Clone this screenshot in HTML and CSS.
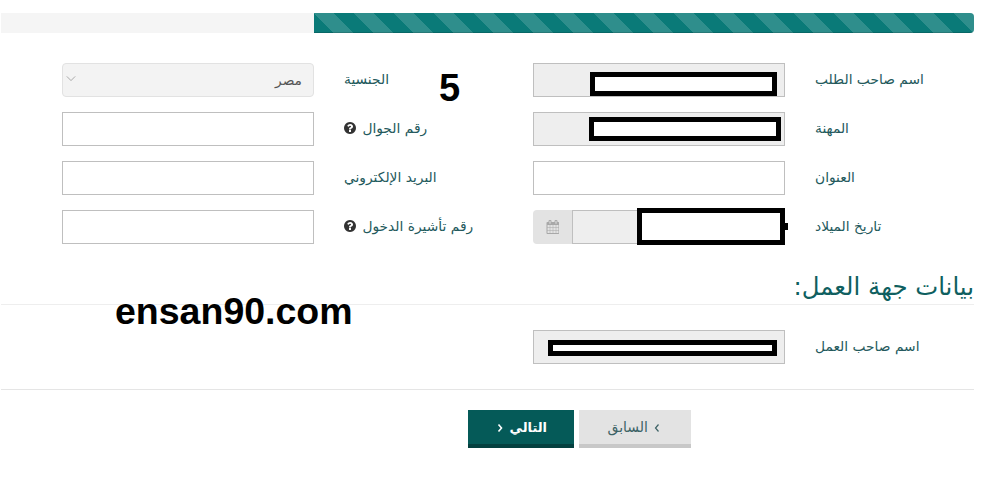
FILE: index.html
```html
<!DOCTYPE html>
<html lang="ar" dir="rtl">
<head>
    <meta charset="UTF-8">
    <title>بيانات مقدم الطلب</title>
    <link rel="stylesheet" href="styles.css">
</head>
<body>
    <div class="page">
        <div class="progress"><div class="progress-bar"></div></div>

        <div class="form-grid">
            <div class="field">
                <label>اسم صاحب الطلب</label>
                <div class="control">
                    <input class="input locked" type="text" readonly>
                    <div class="mask mask-name"></div>
                </div>
            </div>
            <div class="field">
                <label>الجنسية</label>
                <div class="control">
                    <div class="select">
                        <span>مصر</span>
                        <svg class="chevron" viewBox="0 0 12 8"><path d="M1 1.500l5 5 5-5" fill="none" stroke="#999" stroke-width="1"/></svg>
                    </div>
                </div>
            </div>

            <div class="field">
                <label>المهنة</label>
                <div class="control">
                    <input class="input locked" type="text" readonly>
                    <div class="mask mask-job"></div>
                </div>
            </div>
            <div class="field">
                <label>رقم الجوال <svg class="help" viewBox="0 0 1536 1792"><path d="M896 1376v-192q0-14-9-23t-23-9h-192q-14 0-23 9t-9 23v192q0 14 9 23t23 9h192q14 0 23-9t9-23zm256-672q0-88-55.500-163t-138.500-116-170-41q-243 0-371 213-15 24 8 42l132 100q7 6 19 6 16 0 25-12 53-68 86-92 34-24 86-24 48 0 85.500 26t37.500 59q0 38-20 61t-68 45q-63 28-115.500 86.500t-52.500 125.500v36q0 14 9 23t23 9h192q14 0 23-9t9-23q0-19 21.500-49.500t54.500-49.500q32-18 49-28.500t46-35 44.500-48 28-60.500 12.500-81zm384 192q0 209-103 385.500t-279.500 279.500-385.500 103-385.500-103-279.500-279.500-103-385.500 103-385.500 279.500-279.500 385.500-103 385.500 103 279.500 279.500 103 385.500z"/></svg></label>
                <div class="control"><input class="input" type="text"></div>
            </div>

            <div class="field">
                <label>العنوان</label>
                <div class="control"><input class="input" type="text"></div>
            </div>
            <div class="field">
                <label>البريد الإلكتروني</label>
                <div class="control"><input class="input" type="text"></div>
            </div>

            <div class="field">
                <label>تاريخ الميلاد</label>
                <div class="control date">
                    <input class="input locked" type="text" readonly>
                    <span class="addon">
                        <svg class="calendar" viewBox="0 0 1664 1792"><path d="M192 1664h288v-288h-288v288zm352 0h320v-288h-320v288zm-352-352h288v-320h-288v320zm352 0h320v-320h-320v320zm-352-384h288v-288h-288v288zm736 736h320v-288h-320v288zm-384-736h320v-288h-320v288zm768 736h288v-288h-288v288zm-384-352h320v-320h-320v320zm-352-864v-288q0-13-9.500-22.500t-22.500-9.500h-64q-13 0-22.500 9.500t-9.500 22.500v288q0 13 9.500 22.500t22.500 9.500h64q13 0 22.500-9.500t9.500-22.500zm736 864h288v-320h-288v320zm-384-384h320v-288h-320v288zm384 0h288v-288h-288v288zm32-480v-288q0-13-9.500-22.500t-22.500-9.500h-64q-13 0-22.500 9.500t-9.500 22.500v288q0 13 9.500 22.500t22.500 9.500h64q13 0 22.500-9.500t9.500-22.500zm384-64v1280q0 52-38 90t-90 38h-1408q-52 0-90-38t-38-90v-1280q0-52 38-90t90-38h128v-96q0-66 47-113t113-47h64q66 0 113 47t47 113v96h384v-96q0-66 47-113t113-47h64q66 0 113 47t47 113v96h128q52 0 90 38t38 90z"/></svg>
                    </span>
                    <div class="mask mask-date"></div>
                    <div class="mask-nub"></div>
                </div>
            </div>
            <div class="field">
                <label>رقم تأشيرة الدخول <svg class="help" viewBox="0 0 1536 1792"><path d="M896 1376v-192q0-14-9-23t-23-9h-192q-14 0-23 9t-9 23v192q0 14 9 23t23 9h192q14 0 23-9t9-23zm256-672q0-88-55.500-163t-138.500-116-170-41q-243 0-371 213-15 24 8 42l132 100q7 6 19 6 16 0 25-12 53-68 86-92 34-24 86-24 48 0 85.500 26t37.500 59q0 38-20 61t-68 45q-63 28-115.500 86.500t-52.500 125.500v36q0 14 9 23t23 9h192q14 0 23-9t9-23q0-19 21.500-49.500t54.500-49.500q32-18 49-28.500t46-35 44.500-48 28-60.500 12.500-81zm384 192q0 209-103 385.500t-279.500 279.500-385.500 103-385.500-103-279.500-279.500-103-385.500 103-385.500 279.500-279.500 385.500-103 385.500 103 279.500 279.500 103 385.500z"/></svg></label>
                <div class="control"><input class="input" type="text"></div>
            </div>
        </div>

        <h2 class="section-title">بيانات جهة العمل:</h2>

        <div class="form-grid work-row">
            <div class="field">
                <label>اسم صاحب العمل</label>
                <div class="control">
                    <input class="input locked" type="text" readonly>
                    <div class="mask mask-employer"></div>
                </div>
            </div>
        </div>

        <div class="actions">
            <button class="btn btn-prev" type="button">
                <svg class="angle" viewBox="0 0 6 10"><path d="M4.500 1.500L1.500 5l3 3.500" fill="none" stroke="currentColor" stroke-width="1.200"/></svg>
                السابق
            </button>
            <button class="btn btn-next" type="button">
                التالي
                <svg class="angle" viewBox="0 0 6 10"><path d="M1.500 1.500L4.500 5l-3 3.500" fill="none" stroke="currentColor" stroke-width="1.600"/></svg>
            </button>
        </div>
    </div>

    <!-- كتابة فوق الصورة -->
    <div class="stamp stamp-number" dir="ltr">5</div>
    <div class="stamp stamp-site" dir="ltr">ensan90.com</div>
</body>
</html>
```

FILE: styles.css
```css
body {
    margin: 0;
    background-color: #fff;
    color: #23595c;
    font-family: "DejaVu Sans", "Noto Sans", sans-serif;
    font-size: 13.8px;
}

.page {
    padding: 13px 12px 0 1px;
}

/* شريط التقدم */
.progress {
    height: 20px;
    background-color: #f5f5f5;
    border-radius: 0 4px 4px 0;
    overflow: hidden;
}

.progress-bar {
    width: 660px;
    height: 20px;
    background-color: #0a7a78;
    background-image: linear-gradient(45deg, rgba(255, 255, 255, .15) 25%, transparent 25%, transparent 50%, rgba(255, 255, 255, .15) 50%, rgba(255, 255, 255, .15) 75%, transparent 75%, transparent);
    background-size: 40px 40px;
    box-shadow: inset 0 -1px 0 rgba(0, 0, 0, .15);
}

/* الحقول */
.form-grid {
    display: grid;
    grid-template-columns: 441px 441px;
    column-gap: 30px;
    row-gap: 15px;
    margin: 30px 0 0 61px;
}

.field {
    display: grid;
    grid-template-columns: 159px 252px;
    column-gap: 30px;
    align-items: center;
}

.field label {
    text-align: left;
    line-height: 20px;
    margin-top: -2px;
}

.help {
    width: 12px;
    height: 14px;
    margin-right: 2px;
    vertical-align: -2px;
    fill: #333;
}

.control {
    position: relative;
    height: 34px;
}

.input {
    display: block;
    box-sizing: border-box;
    width: 100%;
    height: 34px;
    padding: 0 12px;
    border: 1px solid #bfbfbf;
    border-radius: 0;
    background-color: #fff;
    outline: none;
}

.input.locked {
    background-color: #eee;
}

.select {
    box-sizing: border-box;
    display: flex;
    justify-content: space-between;
    align-items: center;
    height: 34px;
    padding: 0 11px 0 3px;
    background-color: #f3f3f3;
    border: 1px solid #e2e2e2;
    border-radius: 4px;
    color: #555;
}

.chevron {
    width: 10px;
    height: 7px;
    margin: 0 0 4px 0;
}

.date {
    display: flex;
}

.date .input {
    flex: 1;
    width: auto;
}

.addon {
    display: flex;
    align-items: center;
    justify-content: center;
    width: 39px;
    height: 34px;
    background-color: #e3e3e3;
    border-radius: 4px 0 0 4px;
}

.calendar {
    width: 13px;
    height: 14px;
    fill: #a8a8a8;
}

/* المربعات السوداء التي تخفي البيانات */
.mask {
    position: absolute;
    box-sizing: border-box;
    background-color: #fff;
    border: 5px solid #000;
}

.mask-name {
    left: 57px;
    top: 9px;
    width: 187px;
    height: 24px;
}

.mask-job {
    left: 56px;
    top: 5px;
    width: 192px;
    height: 24px;
}

.mask-date {
    left: 104px;
    top: -2px;
    width: 148px;
    height: 37px;
}

.mask-nub {
    position: absolute;
    left: 252px;
    top: 13px;
    width: 3px;
    height: 7px;
    background-color: #000;
}

.mask-employer {
    left: 15px;
    top: 10px;
    width: 229px;
    height: 16px;
}

/* بيانات جهة العمل */
.section-title {
    margin: 28px 0 0;
    padding-bottom: 2px;
    border-bottom: 1px solid #eee;
    color: #0f5f60;
    font-size: 24.4px;
    font-weight: normal;
    line-height: 30px;
}

.work-row {
    margin-top: 25px;
    padding-bottom: 25px;
    border-bottom: 1px solid #e5e5e5;
    margin-left: 0;
    padding-left: 61px;
}

.actions {
    display: flex;
    gap: 5px;
    margin-top: 20px;
    padding-right: 283px;
}

.btn {
    box-sizing: border-box;
    height: 38px;
    border: 0;
    border-bottom: 4px solid;
    font-family: inherit;
    padding: 0;
}

.btn-prev {
    width: 112px;
    background-color: #e3e3e3;
    border-color: #c8c8c8;
    color: #3c6265;
    font-size: 14px;
}

.btn-next {
    width: 106px;
    background-color: #055a58;
    border-color: #04403f;
    color: #fff;
    font-size: 13px;
    font-weight: bold;
}

.angle {
    width: 6px;
    height: 10px;
    margin: 0 2px;
    vertical-align: -1px;
}

.stamp {
    position: absolute;
    color: #000;
    font-family: "Liberation Sans", Arial, sans-serif;
    font-weight: bold;
    line-height: 1;
}

.stamp-number {
    left: 439px;
    top: 69px;
    font-size: 38px;
}

.stamp-site {
    left: 115px;
    top: 293px;
    font-size: 37.500px;
}
```
